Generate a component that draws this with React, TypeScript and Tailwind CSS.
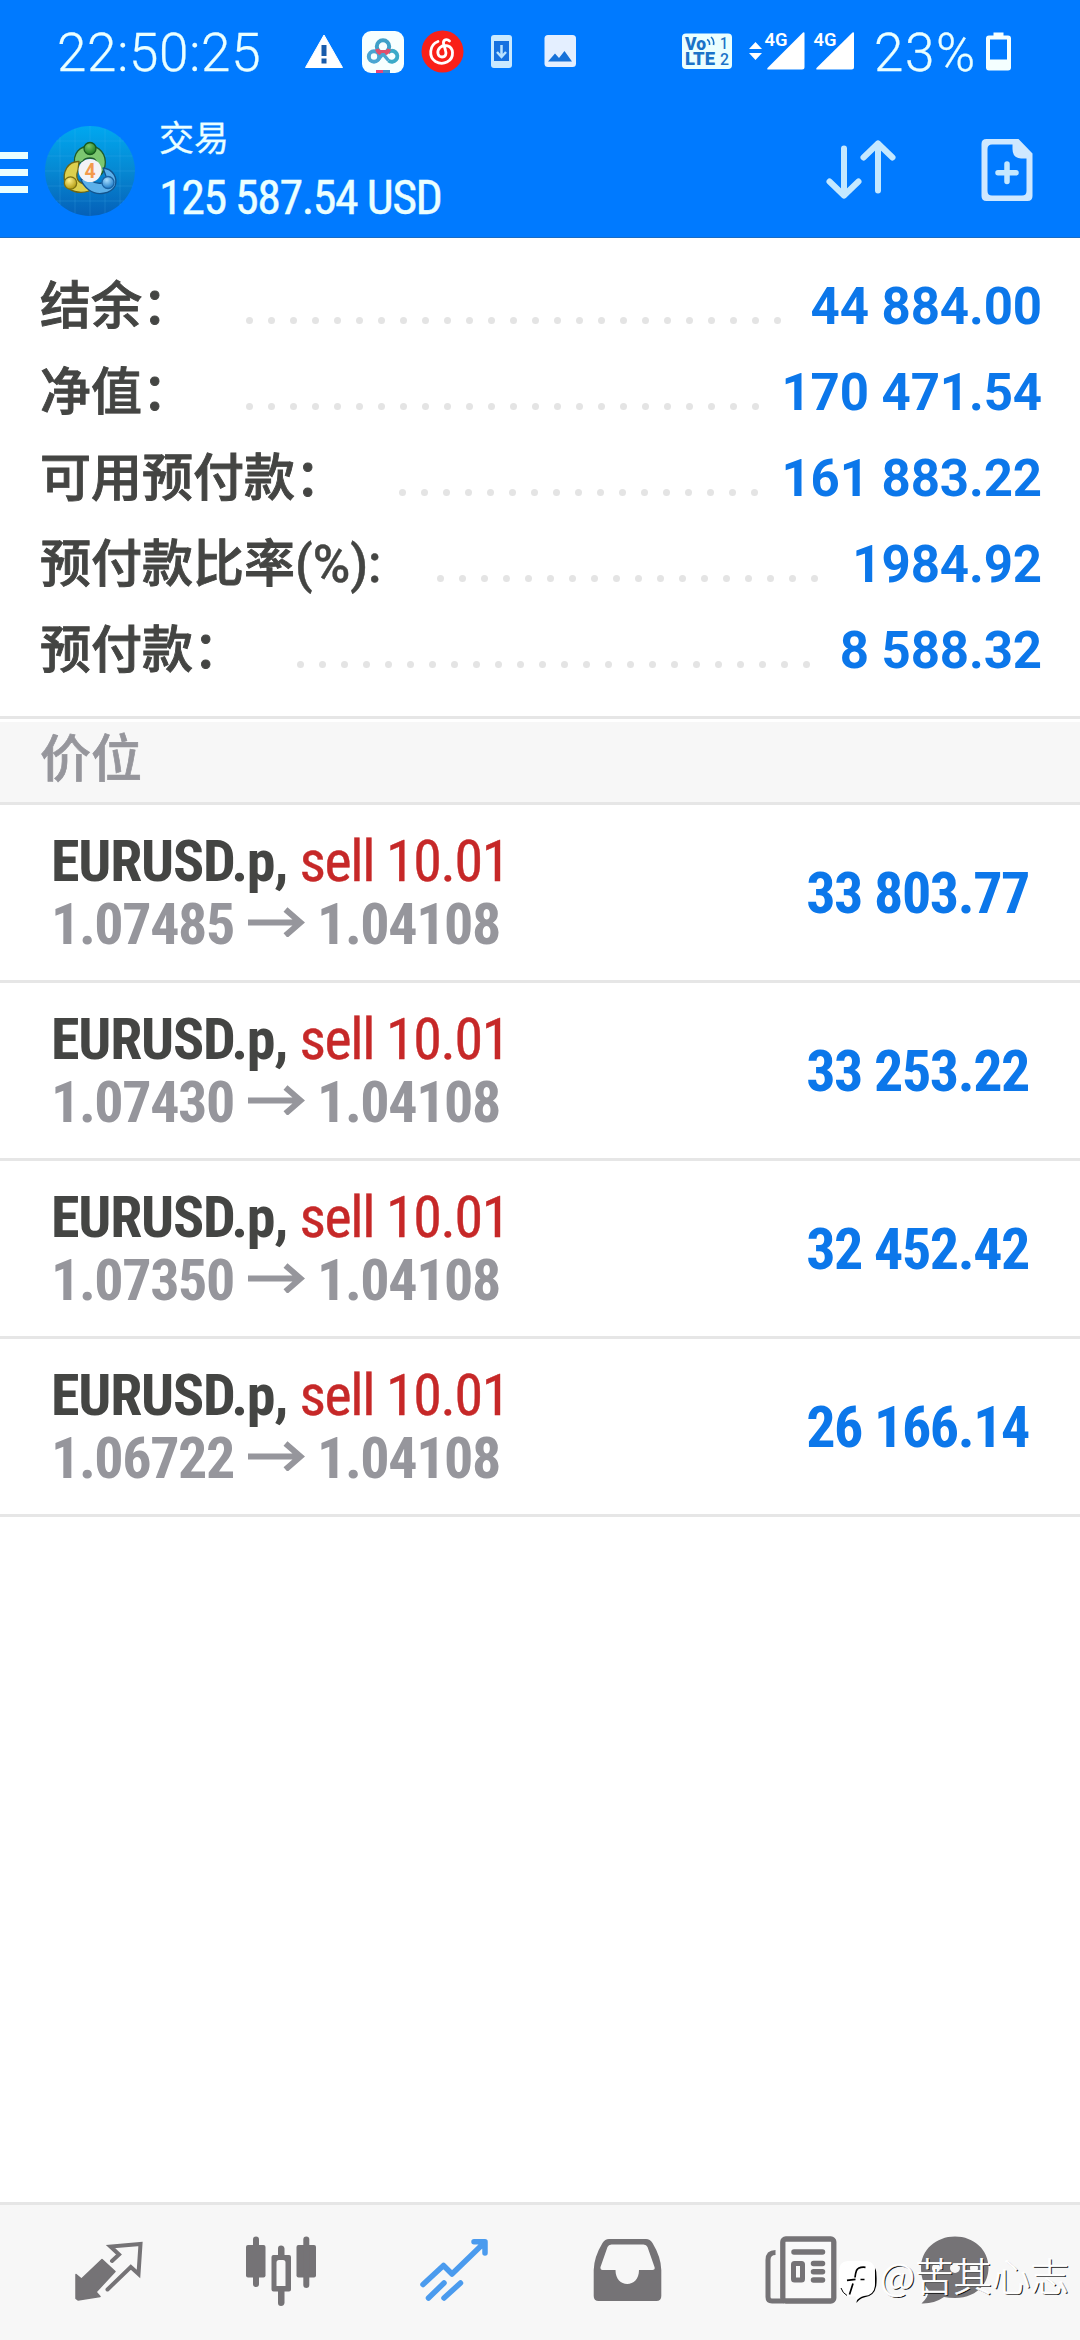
import React from "react";

type Summary = { label: string; suffix: string; value: string; dots: number; width: string };

const summary: Summary[] = [
  { label: "结余：", suffix: "", value: "44 884.00", dots: 25, width: "w-[206px]" },
  { label: "净值：", suffix: "", value: "170 471.54", dots: 24, width: "w-[206px]" },
  { label: "可用预付款：", suffix: "", value: "161 883.22", dots: 17, width: "w-[359px]" },
  { label: "预付款比率", suffix: "(%):", value: "1984.92", dots: 18, width: "w-[397px]" },
  { label: "预付款：", suffix: "", value: "8 588.32", dots: 24, width: "w-[257px]" },
];

const positions = [
  { open: "1.07485", profit: "33 803.77" },
  { open: "1.07430", profit: "33 253.22" },
  { open: "1.07350", profit: "32 452.42" },
  { open: "1.06722", profit: "26 166.14" },
];

function StatusBar() {
  return (
    <div className="flex h-[103px] items-center text-[53px] font-light leading-[104px] text-[#eaffff] [-webkit-text-stroke:0.3px_#eaffff]">
      <span className="ml-[57px] mt-[2px] w-[246px] whitespace-nowrap tracking-[0.7px]">22:50:25</span>
      <svg className="h-[103px] w-[275px] shrink-0" viewBox="303 0 275 103">
        <path
          d="M324 35 L342.5 67.5 H305.500 Z"
          fill="#fff"
          stroke="#fff"
          strokeWidth="1"
          strokeLinejoin="round"
        />
        <rect x="321.500" y="45" width="5" height="11" fill="#1a5cab" />
        <rect x="321.500" y="58.500" width="5" height="5" fill="#1a5cab" />

        <rect x="362" y="31" width="42" height="42" rx="9" fill="#f7ffff" />
        <g fill="none" strokeWidth="4">
          <circle cx="374" cy="56.500" r="5.200" stroke="#4aa5d2" />
          <path d="M388.500 60.500 A5.400 5.400 0 1 0 388 52.500" stroke="#3aaac8" />
          <circle cx="383" cy="46.500" r="6.200" stroke="#3fa0c8" />
          <path d="M377 49 A6.200 6.200 0 0 0 389 49" stroke="#e2506e" />
          <path d="M378 60 L383 54 L388.500 60.500" stroke="#4aa5d2" strokeWidth="3.400" />
          <path d="M380 51.500 H386" stroke="#e2506e" strokeWidth="3" />
        </g>
        <rect x="376" y="70" width="7" height="3" fill="#e8457a" />
        <rect x="383" y="70" width="7" height="3" fill="#3f8fd0" />

        <circle cx="442.500" cy="51.500" r="21" fill="#f92018" />
        <g fill="none" stroke="#fff" strokeWidth="2.800" strokeLinecap="round">
          <path d="M438 41.500 C429 45 428.500 57 435.500 61.500 C443 66 453 61.500 452.500 52.500 C452 45 444 44 440 47.500 C436 51.500 438 57 442 57 C446 57 446.500 53.500 445.500 50.500 L443.500 43.500 C442.800 39.500 447 38.500 449.500 41" />
        </g>

        <rect x="491" y="35" width="21" height="33" rx="3" fill="#c9e9ff" />
        <rect x="494" y="41" width="15" height="20" fill="#1671e0" />
        <path d="M501.500 45 V56 M497 52 L501.500 57 L506 52" fill="none" stroke="#b9e2ff" strokeWidth="2.500" />

        <rect x="544.500" y="35" width="31.500" height="32" rx="3.500" fill="#e4efff" />
        <path d="M548 61.500 L555 53.500 L559 58 L564.500 51 L572 61.500 Z" fill="#1671d8" />
      </svg>
      <svg className="ml-[102px] h-[103px] w-[180px] shrink-0 [-webkit-text-stroke:0]" viewBox="680 0 180 103">
        <rect x="682" y="33.500" width="50" height="35.500" rx="4" fill="#eaffff" />
        <g fill="#1a73c8" fontFamily="Roboto, sans-serif">
          <text x="685" y="49.500" fontSize="18" fontWeight="900" textLength="21" lengthAdjust="spacingAndGlyphs">Vo</text>
          <text x="685" y="65" fontSize="17.500" fontWeight="900" textLength="30" lengthAdjust="spacingAndGlyphs">LTE</text>
          <text x="720" y="49" fontSize="17" fontWeight="500" textLength="8" lengthAdjust="spacingAndGlyphs">1</text>
          <text x="720" y="65" fontSize="17" fontWeight="500" textLength="9" lengthAdjust="spacingAndGlyphs">2</text>
        </g>
        <path d="M707 39.500 Q710 41 709.500 45 M711 37 Q714.500 40 713.500 45" fill="none" stroke="#1a73c8" strokeWidth="1.600" />
        <path d="M755.500 42 L762 49 H749 Z M749 53 H762 L755.500 60 Z" fill="#fff" />
        <g fill="#fff">
          <text x="764.500" y="46" fontSize="18.500" fontWeight="600" fontFamily="Roboto, sans-serif" textLength="23" lengthAdjust="spacingAndGlyphs">4G</text>
          <text x="813.500" y="46" fontSize="18.500" fontWeight="600" fontFamily="Roboto, sans-serif" textLength="23" lengthAdjust="spacingAndGlyphs">4G</text>
          <path d="M803 32.500 Q804.500 31.500 804.500 33.500 V67 Q804.500 69.500 802 69.500 H768 Q766.500 69.500 767.500 68 Z" />
          <path d="M852.500 32.500 Q854 31.500 854 33.500 V67 Q854 69.500 851.500 69.500 H817 Q815.500 69.500 816.500 68 Z" />
        </g>
      </svg>
      <span className="ml-[14px] mt-[2px] w-[112px] whitespace-nowrap tracking-[1.6px]">23%</span>
      <svg className="h-[40px] w-[26px] shrink-0" viewBox="986 31.5 26 40">
        <path d="M993.500 32 H1003.500 V35 H1008 Q1011 35 1011 38 V67 Q1011 70 1008 70 H989 Q986 70 986 67 V38 Q986 35 989 35 H993.500 Z M990 39 V59 H1007 V39 Z" fill="#f4ffff" fillRule="evenodd" />
      </svg>
    </div>
  );
}

function AppLogo() {
  return (
    <svg className="h-[90px] w-[90px] shrink-0" viewBox="0 0 90 90">
      <defs>
        <linearGradient id="sky" x1="0" y1="0" x2="0" y2="1">
          <stop offset="0" stopColor="#00a8f0" />
          <stop offset="0.500" stopColor="#0688d2" />
          <stop offset="1" stopColor="#0560b8" />
        </linearGradient>
        <radialGradient id="gg" cx="0.400" cy="0.300" r="0.700">
          <stop offset="0" stopColor="#7cc86a" />
          <stop offset="1" stopColor="#1c7a22" />
        </radialGradient>
        <radialGradient id="gy" cx="0.400" cy="0.300" r="0.700">
          <stop offset="0" stopColor="#fff08a" />
          <stop offset="1" stopColor="#b39a10" />
        </radialGradient>
        <radialGradient id="gb" cx="0.400" cy="0.300" r="0.700">
          <stop offset="0" stopColor="#a8deff" />
          <stop offset="1" stopColor="#1e7cc8" />
        </radialGradient>
      </defs>
      <circle cx="45" cy="45" r="45" fill="url(#sky)" />
      <path d="M30 2.500 V87 M45 0 V90 M60 2.500 V87 M15 11 V79 M75 11 V79 M2.500 30 H87.500 M0 45 H90 M2.500 60 H87.500 M11 15 H79 M11 75 H79" stroke="#5cc4f4" strokeOpacity="0.180" strokeWidth="1" />
      <g strokeWidth="1.300" strokeLinejoin="round">
        <path d="M30 40 C27 26 36 20 45 20 C54 20 62 28 60 40 C59 45 56 49 54 50 L51 35 C49 31 41 31 38 35 Z" fill="#7cc770" stroke="#1f5c2c" />
        <path d="M34 35.500 C23 35 17 46 20 57 C23 66 35 68 44 65 L45 58 C36 59 29 55 33 44 Z" fill="#ddd04e" stroke="#6c6514" />
        <path d="M58 42 C68 43 73 52 70 60 C66 68 52 70 44 64 C40 61 37 57 36 53 L45 54 C52 59 60 58 62 53 Z" fill="#5bb0ea" stroke="#12548e" />
        <circle cx="45" cy="22.500" r="6" fill="url(#gg)" stroke="#17591f" />
        <circle cx="25.500" cy="57" r="6.200" fill="url(#gy)" stroke="#7c7012" />
        <circle cx="63" cy="56.500" r="6" fill="url(#gb)" stroke="#1d64a4" />
      </g>
      <circle cx="45" cy="44.500" r="11.500" fill="#f3f3f5" />
      <text x="45" y="51.500" textAnchor="middle" fontFamily="Roboto, sans-serif" fontWeight="700" fontSize="19.500" fill="#f39a4a">4</text>
    </svg>
  );
}

function TitleBar() {
  return (
    <div className="flex h-[135px] items-start">
      <div className="mt-[49px] flex w-[28px] flex-col gap-[10px]">
        <div className="h-[7px] bg-[#eaffff]" />
        <div className="h-[7px] bg-[#eaffff]" />
        <div className="h-[7px] bg-[#eaffff]" />
      </div>
      <div className="ml-[17px] mt-[23px]">
        <AppLogo />
      </div>
      <div className="ml-[24px] w-[400px] text-[#eaffff]">
        <div className="mt-[17px] h-[40px] text-[35px] leading-[40px] [-webkit-text-stroke:0.3px_#eaffff]">交易</div>
        <div className="mt-[8px] h-[60px] whitespace-nowrap text-[48px] leading-[60px] tracking-[-1.5px] [-webkit-text-stroke:0.4px_#eaffff] [font-stretch:75%]">
          125 587.54 USD
        </div>
      </div>
      <svg className="ml-auto h-[135px] w-[260px]" viewBox="820 103 260 135">
        <g fill="none" stroke="#c4e8ff" strokeWidth="6" strokeLinecap="round" strokeLinejoin="round">
          <path d="M844 148.500 V195.500 M829.500 181.500 L844 195.500 L858.500 181.500" />
          <path d="M878 190.500 V143.500 M863.500 157.500 L878 143.500 L892.500 157.500" />
        </g>
        <path
          d="M986.500 139 H1018.500 L1032.500 153.500 V196 Q1032.500 201 1027.500 201 H986.500 Q981.500 201 981.500 196 V144 Q981.500 139 986.500 139 Z M992 144.500 Q987.500 144.500 987.500 149 V191 Q987.500 195.500 992 195.500 H1022 Q1026.500 195.500 1026.500 191 V158.500 H1021 Q1012.500 158 1012.500 149 V144.500 Z"
          fill="#cfe8ff"
          fillRule="evenodd"
        />
        <path d="M1007 164 V181.500 M998 172.800 H1016" stroke="#c4e8ff" strokeWidth="5.500" strokeLinecap="round" />
      </svg>
    </div>
  );
}

function SummaryRow({ row }: { row: Summary }) {
  return (
    <div className="flex h-[86px] items-center">
      <div className={`${row.width} shrink-0 whitespace-nowrap text-[51px] font-medium leading-[86px] text-[#444543]`}>
        <span className="[-webkit-text-stroke:0.9px_#444543]">{row.label}</span>
        <span className="[-webkit-text-stroke:0.4px_#444543]">{row.suffix}</span>
      </div>
      <div className="mt-[27px] flex gap-[15px]">
        {Array.from({ length: row.dots }, (_, i) => (
          <i key={i} className="size-[7px] rounded-full bg-[#e4e4e4]" />
        ))}
      </div>
      <div className="ml-auto whitespace-nowrap text-[51px] font-bold leading-[86px] tracking-[-0.1px] text-[#0c77ea]">
        {row.value}
      </div>
    </div>
  );
}

function PositionRow({ open, profit }: { open: string; profit: string }) {
  return (
    <div className="flex h-[178px] items-center justify-between border-b-[3px] border-[#e6e6e6] pl-[51px] pr-[51px] text-[58px] tracking-[-1.4px] [font-stretch:75%]">
      <div className="whitespace-nowrap leading-[63px]">
        <div>
          <span className="font-bold tracking-[-1.2px] text-[#444543]">EURUSD.p, </span>
          <span className="text-[#c62828] [-webkit-text-stroke:0.4px_#c62828]">sell 10.01</span>
        </div>
        <div className="flex font-bold text-[#96969c]">
          <span className="w-[197px]">{open}</span>
          <svg className="mt-[14px] h-[30px] w-[57px]" viewBox="0 0 57 30">
            <path d="M0 15.500 H53 M37.500 2.500 L52.500 15.500 L37.500 28.500" fill="none" stroke="#96969c" strokeWidth="6" />
          </svg>
          <span className="ml-[12px]">1.04108</span>
        </div>
      </div>
      <div className="mt-px whitespace-nowrap font-bold text-[#0c77ea]">{profit}</div>
    </div>
  );
}

function NavBar() {
  const gray = "#757376";
  return (
    <nav className="relative flex h-[138px] border-t-[3px] border-[#e6e6e6] bg-[#f7f7f7] pl-[22px]">
      <svg className="h-[135px] w-[173px] shrink-0" viewBox="22 2205 173 135">
        <path d="M76 2274.500 L81.500 2279 L102 2259.500 L115 2271.500 L96 2292 L100 2296.500 L78 2300 L76 2298.500 Z" fill={gray} stroke={gray} strokeWidth="1.500" strokeLinejoin="round" />
        <path d="M112 2261 L119 2254.500 L110.500 2246.500 L140.500 2244 L138.500 2274 L130.800 2267 L107.500 2289.500" fill="none" stroke={gray} strokeWidth="4" strokeLinecap="round" />
      </svg>
      <svg className="h-[135px] w-[173px] shrink-0" viewBox="195 2205 173 135">
        <g fill={gray}>
          <rect x="246" y="2245" width="19.500" height="32.500" rx="2" />
          <rect x="253" y="2236.500" width="6" height="50.500" rx="3" />
          <path fillRule="evenodd" d="M273.500 2255 H289 Q291 2255 291 2257 V2289.500 Q291 2291.500 289 2291.500 H273.500 Q271.500 2291.500 271.500 2289.500 V2257 Q271.500 2255 273.500 2255 Z M279 2260 Q276.500 2260 276.500 2262.500 V2286 H285.500 V2262.500 Q285.500 2260 283 2260 Z" />
          <path d="M278 2256 V2248.500 Q278 2245.500 281 2245.500 T284.500 2248.500 V2256 Z M278 2291 V2303 Q278 2306 281 2306 T284.500 2303 V2291 Z" />
          <rect x="296.500" y="2245" width="19.500" height="32.500" rx="2" />
          <rect x="303.300" y="2236.500" width="6" height="51.500" rx="3" />
        </g>
      </svg>
      <svg className="h-[135px] w-[173px] shrink-0" viewBox="368 2205 173 135">
        <path d="M423 2284.500 L443.500 2265.500 L452 2274 L484.500 2242.500 M474 2241.800 H485 V2253" fill="none" stroke="#4b9bee" strokeWidth="5.500" strokeLinecap="round" strokeLinejoin="round" />
        <path d="M428.500 2298 L444 2283 M444 2298 L460.500 2283" fill="none" stroke="#4b9bee" strokeWidth="5.500" strokeLinecap="round" />
      </svg>
      <svg className="h-[135px] w-[173px] shrink-0" viewBox="541 2205 173 135">
        <path
          fill={gray}
          fillRule="evenodd"
          d="M609 2239 H646 Q650 2239 652.500 2243 Q661 2257 661.300 2270 V2296 Q661.300 2301 656.300 2301 H598.700 Q593.700 2301 593.700 2296 V2270 Q594 2257 602.500 2243 Q605 2239 609 2239 Z M611.500 2244.500 Q608.500 2244.500 607.500 2247 L600.500 2267 Q600 2270 602.500 2270 H615.500 C615.500 2279 621 2284 627.200 2284 C633.500 2284 639 2279 639 2270 H652.500 Q655.500 2270 654.500 2267 L647.500 2247 Q646.500 2244.500 643.500 2244.500 Z"
        />
      </svg>
      <svg className="h-[135px] w-[173px] shrink-0" viewBox="714 2205 173 135">
        <rect x="782.800" y="2239" width="51" height="62" rx="3" fill="#f9f9f9" stroke={gray} strokeWidth="5.300" />
        <path d="M775.500 2252.500 Q768 2252.500 768 2260 V2297 Q768 2301 772 2301 H784" fill="none" stroke={gray} strokeWidth="5" />
        <g stroke={gray} strokeWidth="5.500" strokeLinecap="round">
          <path d="M794 2252 H822.500 M813.500 2263.500 H822.500 M813.500 2271.800 H822.500 M813.500 2280 H822.500" />
        </g>
        <rect x="793.500" y="2263.500" width="9" height="16.500" rx="1" fill="#f9f9f9" stroke={gray} strokeWidth="5" />
      </svg>
      <svg className="h-[135px] w-[173px] shrink-0" viewBox="887 2205 173 135">
        <path fill={gray} d="M955 2236.500 C974 2236.500 988.500 2250 988.500 2267.500 C988.500 2286 974 2298 955 2298 Q949 2298 944 2297 Q934 2304 921.500 2303.500 Q929 2297 928.500 2290 C923 2284 921 2276 921 2267.500 C921 2250 936 2236.500 955 2236.500 Z" />
        <g fill="#f7f7f7">
          <circle cx="936" cy="2268" r="4" />
          <circle cx="955" cy="2268" r="5" />
          <circle cx="974" cy="2268" r="4" />
        </g>
      </svg>
      <div className="absolute left-[836px] top-[50px] flex items-start">
        <svg className="h-[48px] w-[44px]" viewBox="836 2255 44 48">
          <path d="M875.500 2268 Q877 2273 876.500 2283 Q876 2296 864 2297.500 Q859.500 2298.500 856.500 2303 L857 2297 L870 2290 Z" fill="#000" />
          <path d="M848 2261 H865 Q875 2261 875 2272 V2284 Q875 2295.500 864 2296 Q859 2297 856 2301.500 L855.500 2296.500 H849 Q839 2296 839 2285 V2272 Q839 2261 848 2261 Z" fill="#fff" />
          <path d="M865.500 2267.300 Q858.500 2266.500 856.500 2270.500 Q855.500 2273 855 2277.500 M847 2280.300 L855.500 2279.300 M853 2283.500 L849.500 2294.500 M860.500 2279.500 H864.500" fill="none" stroke="#000" strokeWidth="1.700" />
          <path d="M841 2288 Q842.500 2293 847 2295.500" fill="none" stroke="#000" strokeWidth="1" />
        </svg>
        <span className="-mt-[5px] whitespace-nowrap font-['Noto_Sans_CJK_SC',sans-serif] text-[38.5px] font-light leading-[48px] text-white [-webkit-text-stroke:0.6px_#fff] [text-shadow:1.3px_1.3px_0_#111]">
          @苦其心志
        </span>
      </div>
    </nav>
  );
}

export default function App() {
  return (
    <div className="flex h-[2340px] w-[1080px] flex-col overflow-hidden bg-white font-[Roboto,'Noto_Sans_CJK_SC',sans-serif]">
      <header className="h-[238px] border-b border-[#1a6cc4] bg-[#007aff]">
        <StatusBar />
        <TitleBar />
      </header>
      <section className="h-[481px] border-b-[3px] border-[#e6e6e6] pl-[40px] pr-[38px] pt-[26px]">
        {summary.map((row) => (
          <SummaryRow key={row.label} row={row} />
        ))}
      </section>
      <div className="mt-[3px] h-[83px] border-b-[3px] border-[#e6e6e6] bg-[#f7f7f7] pl-[40px] text-[51px] font-medium leading-[75px] text-[#96969c] [-webkit-text-stroke:0.7px_#96969c]">
        价位
      </div>
      <main className="flex-1">
        {positions.map((p) => (
          <PositionRow key={p.open} {...p} />
        ))}
      </main>
      <NavBar />
    </div>
  );
}
